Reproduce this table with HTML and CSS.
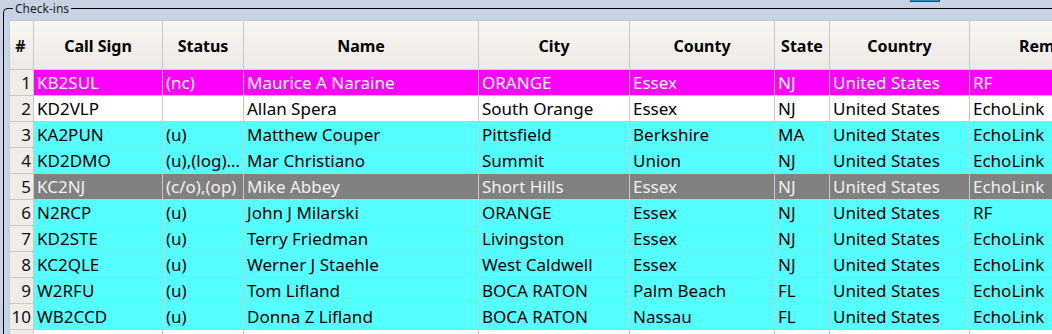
FILE: index.html
```html
<!DOCTYPE html>
<html>
<head>
<meta charset="utf-8">
<link rel="stylesheet" href="styles.css">
</head>
<body>
<div class="topbtn"></div>
<div class="group">
  <span class="group-title">Check-ins</span>
  <div class="grid">
    <div class="row head">
      <div class="c rn">#</div><div class="c">Call Sign</div><div class="c">Status</div><div class="c">Name</div><div class="c">City</div><div class="c">County</div><div class="c">State</div><div class="c">Country</div><div class="c rem">Rem</div>
    </div>
    <div class="row mag">
      <div class="c rn">1</div><div class="c">KB2SUL</div><div class="c">(nc)</div><div class="c">Maurice A Naraine</div><div class="c">ORANGE</div><div class="c">Essex</div><div class="c">NJ</div><div class="c">United States</div><div class="c">RF</div>
    </div>
    <div class="row wht">
      <div class="c rn">2</div><div class="c">KD2VLP</div><div class="c"></div><div class="c">Allan Spera</div><div class="c">South Orange</div><div class="c">Essex</div><div class="c">NJ</div><div class="c">United States</div><div class="c">EchoLink</div>
    </div>
    <div class="row cy">
      <div class="c rn">3</div><div class="c">KA2PUN</div><div class="c">(u)</div><div class="c">Matthew Couper</div><div class="c">Pittsfield</div><div class="c">Berkshire</div><div class="c">MA</div><div class="c">United States</div><div class="c">EchoLink</div>
    </div>
    <div class="row cy">
      <div class="c rn">4</div><div class="c">KD2DMO</div><div class="c">(u),(log)…</div><div class="c">Mar Christiano</div><div class="c">Summit</div><div class="c">Union</div><div class="c">NJ</div><div class="c">United States</div><div class="c">EchoLink</div>
    </div>
    <div class="row gry">
      <div class="c rn">5</div><div class="c">KC2NJ</div><div class="c">(c/o),(op)</div><div class="c">Mike Abbey</div><div class="c">Short Hills</div><div class="c">Essex</div><div class="c">NJ</div><div class="c">United States</div><div class="c">EchoLink</div>
    </div>
    <div class="row cy">
      <div class="c rn">6</div><div class="c">N2RCP</div><div class="c">(u)</div><div class="c">John J Milarski</div><div class="c">ORANGE</div><div class="c">Essex</div><div class="c">NJ</div><div class="c">United States</div><div class="c">RF</div>
    </div>
    <div class="row cy">
      <div class="c rn">7</div><div class="c">KD2STE</div><div class="c">(u)</div><div class="c">Terry Friedman</div><div class="c">Livingston</div><div class="c">Essex</div><div class="c">NJ</div><div class="c">United States</div><div class="c">EchoLink</div>
    </div>
    <div class="row cy">
      <div class="c rn">8</div><div class="c">KC2QLE</div><div class="c">(u)</div><div class="c">Werner J Staehle</div><div class="c">West Caldwell</div><div class="c">Essex</div><div class="c">NJ</div><div class="c">United States</div><div class="c">EchoLink</div>
    </div>
    <div class="row cy">
      <div class="c rn">9</div><div class="c">W2RFU</div><div class="c">(u)</div><div class="c">Tom Lifland</div><div class="c">BOCA RATON</div><div class="c">Palm Beach</div><div class="c">FL</div><div class="c">United States</div><div class="c">EchoLink</div>
    </div>
    <div class="row cy">
      <div class="c rn">10</div><div class="c">WB2CCD</div><div class="c">(u)</div><div class="c">Donna Z Lifland</div><div class="c">BOCA RATON</div><div class="c">Nassau</div><div class="c">FL</div><div class="c">United States</div><div class="c">EchoLink</div>
    </div>
    <div class="row wht">
      <div class="c rn"></div><div class="c"></div><div class="c"></div><div class="c"></div><div class="c"></div><div class="c"></div><div class="c"></div><div class="c"></div><div class="c"></div>
    </div>
  </div>
</div>
</body>
</html>
```

FILE: styles.css
```css
html, body {
  margin: 0;
  padding: 0;
}
body {
  width: 1052px;
  height: 334px;
  overflow: hidden;
  background: #c8d2e5;
  font-family: "Noto Sans", "Open Sans", sans-serif;
  position: relative;
}
.topbtn {
  position: absolute;
  left: 910px;
  top: -3px;
  width: 28px;
  height: 3px;
  background: #2f8cbf;
  border: 1px solid #1d4f6e;
}
.group {
  position: relative;
  margin: 8px 0 0 3px;
  border-top: 1px solid #000;
  border-left: 1px solid #000;
  border-top-left-radius: 5px;
  height: 400px;
}
.group-title {
  position: absolute;
  left: 9px;
  top: -8px;
  padding: 0 2px;
  background: #c8d2e5;
  font-size: 12px;
  line-height: 16px;
  color: #1c1c1c;
}
.grid {
  margin: 11px 0 0 5px;
  display: grid;
  grid-template-columns: 23px 128px 80px 234px 150px 144px 54px 139px 140px;
  grid-template-rows: 48px repeat(11, 25px);
  gap: 1px;
  padding: 1px 0 0 1px;
  background: #c9c9c9;
  width: 1140px;
}
.row {
  display: contents;
}
.c {
  font-size: 17px;
  line-height: 25px;
  padding: 0 0 0 3px;
  white-space: nowrap;
  overflow: hidden;
  color: #000;
}
.head .c {
  background: linear-gradient(#f8f6f3, #eeeae5);
  font-weight: bold;
  font-size: 16px;
  text-align: center;
  line-height: 50px;
  padding: 0;
}
.head .rem {
  text-align: left;
  padding-left: 49px;
}
.c.rn {
  background: #f0ece8;
  text-align: right;
  padding: 0 2px 0 0;
  color: #111;
}
.mag .c { background: #ff00ff; color: #fff; }
.wht .c { background: #fff; }
.cy .c { background: #55ffff; }
.gry .c { background: #808080; color: #f0f0f0; }
.row .c.rn { background: #f0ece8; color: #111; }
.head .c.rn { background: linear-gradient(#f8f6f3, #eeeae5); text-align: center; }
```
